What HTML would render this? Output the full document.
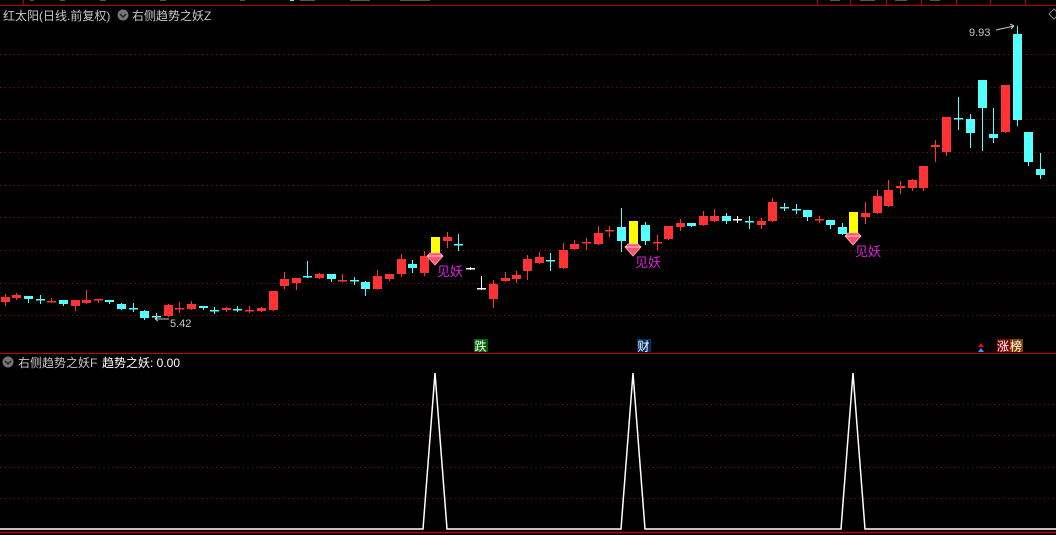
<!DOCTYPE html>
<html><head><meta charset="utf-8"><style>
html,body{margin:0;padding:0;background:#000;width:1056px;height:535px;overflow:hidden}
svg{display:block}
text{font-family:"Liberation Sans","Noto Sans CJK SC","WenQuanYi Zen Hei",sans-serif}
</style></head><body>
<svg id="s" width="1056" height="535" xmlns="http://www.w3.org/2000/svg">
<rect width="1056" height="535" fill="#000"/>
<line x1="0" y1="5.5" x2="1056" y2="5.5" stroke="#b00000" stroke-width="1"/>
<g stroke="#b00000"><line x1="23.5" y1="0" x2="23.5" y2="5"/><line x1="817.5" y1="0" x2="817.5" y2="5"/><line x1="850.5" y1="0" x2="850.5" y2="5"/><line x1="886.5" y1="0" x2="886.5" y2="5"/><line x1="921.5" y1="0" x2="921.5" y2="5"/><line x1="956.5" y1="0" x2="956.5" y2="5"/><line x1="990.5" y1="0" x2="990.5" y2="5"/><line x1="1025.5" y1="0" x2="1025.5" y2="5"/></g>
<g fill="#555"><rect x="30" y="0" width="4" height="1"/><rect x="60" y="0" width="5" height="1"/><rect x="100" y="0" width="6" height="1"/><rect x="160" y="0" width="6" height="1"/><rect x="240" y="0" width="5" height="1"/><rect x="300" y="0" width="15" height="1"/><rect x="350" y="0" width="20" height="1"/><rect x="400" y="0" width="30" height="1"/><rect x="830" y="0" width="10" height="1"/><rect x="860" y="0" width="15" height="1"/><rect x="895" y="0" width="12" height="1"/><rect x="930" y="0" width="10" height="1"/></g>
<g fill="#4ff"><rect x="290" y="0" width="4" height="1"/></g>
<text x="3" y="20" font-size="12" fill="#c8c8c8">红太阳(日线.前复权)</text>
<circle cx="123" cy="15" r="5.5" fill="#777"/><path d="M120 14l3 3 3-3" stroke="#222" stroke-width="1.5" fill="none"/>
<text x="132" y="20" font-size="12" fill="#c8c8c8">右侧趋势之妖Z</text>
<g stroke="#9a1010" stroke-dasharray="1 3.5" stroke-width="1">
<line x1="0" y1="54.5" x2="1056" y2="54.5"/><line x1="0" y1="87.5" x2="1056" y2="87.5"/><line x1="0" y1="119.5" x2="1056" y2="119.5"/><line x1="0" y1="152.5" x2="1056" y2="152.5"/><line x1="0" y1="185.5" x2="1056" y2="185.5"/><line x1="0" y1="217.5" x2="1056" y2="217.5"/><line x1="0" y1="250.5" x2="1056" y2="250.5"/><line x1="0" y1="283.5" x2="1056" y2="283.5"/><line x1="0" y1="315.5" x2="1056" y2="315.5"/>
<line x1="0" y1="404.5" x2="1056" y2="404.5"/><line x1="0" y1="435.5" x2="1056" y2="435.5"/><line x1="0" y1="467.5" x2="1056" y2="467.5"/><line x1="0" y1="498.5" x2="1056" y2="498.5"/>
</g>
<g id="c"></g>
<g id="d"></g>
<text x="437" y="276" font-size="13" fill="#e020e0">见妖</text>
<text x="635" y="267" font-size="13" fill="#e020e0">见妖</text>
<text x="855" y="256" font-size="13" fill="#e020e0">见妖</text>
<text x="170" y="327" font-size="11" fill="#c8c8c8">5.42</text>
<path d="M155 319l3-3M155 319l3 2M155 319h14" stroke="#c8c8c8" fill="none"/>
<text x="969" y="36" font-size="11" fill="#c8c8c8">9.93</text>
<path d="M996 30l18-4M1014 26l-4-2M1014 26l-3 3" stroke="#c8c8c8" fill="none"/>
<path d="M1049 14l5 -5 5 5 -5 5z" stroke="#888" fill="none"/>
<rect x="474" y="339" width="14" height="13" fill="#006400"/><text x="474.5" y="350.5" font-size="12" fill="#fff">跌</text>
<rect x="637" y="339" width="14" height="13" fill="#003060"/><text x="637.5" y="350.5" font-size="12" fill="#fff">财</text>
<path d="M978 347l3-4 3 4z" fill="#e00"/><path d="M978 352l3-4 3 4z" fill="#39f"/>
<rect x="997" y="339" width="13" height="13" fill="#800000"/><text x="997" y="350.5" font-size="12" fill="#fff">涨</text>
<rect x="1010" y="339" width="13" height="13" fill="#804000"/><text x="1010" y="350.5" font-size="12" fill="#fff">榜</text>
<line x1="0" y1="353.5" x2="1056" y2="353.5" stroke="#c00000"/>
<circle cx="8" cy="362" r="5.5" fill="#777"/><path d="M5 361l3 3 3-3" stroke="#222" stroke-width="1.5" fill="none"/>
<text x="18" y="367" font-size="12" fill="#c8c8c8">右侧趋势之妖F</text>
<text x="102" y="367" font-size="12" fill="#fff">趋势之妖: 0.00</text>
<polyline points="0,529 423,529 435,373 447,529 621,529 633,373 645,529 841,529 853,373 865,529 1056,529" fill="none" stroke="#fff" stroke-width="1.5"/>
<line x1="0" y1="532.5" x2="1056" y2="532.5" stroke="#c00000" stroke-width="1.5"/>
</svg>
<script>
var R='#ff3333',C='#54ffff',W='#ffffff',Y='#ffff00';
var D=[[5,297,302,294,305,R],[16,295,298,293,299,R],[28,296,299,296,302,C],[40,299,300,295,303,C],[51,301,302,298,302,R],[63,300,304,300,305,C],[75,300,306,300,310,R],[86,300,303,290,303,R],[98,299,300,299,302,R],[109,300,302,300,303,C],[121,304,309,303,309,C],[133,308,309,303,311,C],[144,311,318,310,319,C],[156,316,317,313,319,C],[168,305,316,304,316,R],[179,308,309,302,312,R],[191,304,309,301,309,R],[203,306,308,306,309,C],[214,310,311,307,313,C],[226,308,310,307,311,R],[237,309,310,306,311,C],[249,310,311,306,312,R],[261,308,311,307,311,R],[273,291,310,291,310,R],[284,279,286,272,288,R],[296,278,283,278,289,R],[307,276,277,261,277,C],[319,274,278,273,278,R],[331,274,279,274,281,C],[342,280,281,274,281,R],[354,280,281,277,284,C],[365,282,289,281,295,C],[377,276,289,270,289,R],[389,274,279,274,280,R],[401,259,274,254,276,R],[412,264,268,260,272,C],[424,256,273,251,275,R],[435,237,256,237,256,Y],[447,237,241,232,247,R],[458,244,245,234,250,C],[470,268,269,267,269,W],[481,288,289,276,289,W],[493,284,299,280,307,R],
[505,278,281,272,281,R],[516,275,279,271,282,R],[527,259,271,255,279,R],[539,257,263,252,263,R],[550,260,261,253,270,C],[563,250,268,243,268,R],[574,244,249,240,249,R],[586,242,243,238,249,R],[598,233,244,226,244,R],[609,230,231,226,236,R],[621,227,241,208,251,C],[633,221,246,221,246,Y],[645,225,241,222,244,C],[657,242,243,235,250,R],[668,226,239,226,239,R],[680,223,227,219,230,R],[691,223,226,223,226,C],[703,216,225,211,225,R],[714,216,221,209,221,R],[726,216,221,213,223,C],[737,219,220,216,222,W],[749,221,222,216,228,C],[761,221,225,218,228,R],[772,202,221,198,221,R],[784,207,208,203,210,C],[796,209,210,204,213,C],[807,210,217,210,220,C],[819,219,220,216,222,R],[830,220,225,220,228,C],[842,227,234,223,234,C],[853,212,234,212,234,Y],[865,213,217,202,223,R],[877,196,213,190,213,R],[888,190,206,180,206,R],[900,186,188,181,193,R],[912,180,188,179,190,R],
[923,166,188,166,190,R],[935,145,147,140,161,R],[946,117,152,117,155,R],[958,118,119,97,129,C],[970,119,133,114,147,C],[982,80,108,80,150,C],[993,134,138,108,142,C],[1005,85,132,85,132,R],[1017,34,120,26,125,C],[1028,132,162,132,165,C],[1040,169,175,153,178,C]];
var g=document.getElementById('c'),h='';
D.forEach(function(d){var x=d[0],c=d[5];
h+='<line x1="'+(x+.5)+'" y1="'+d[3]+'" x2="'+(x+.5)+'" y2="'+(d[4]+1)+'" stroke="'+c+'"/>';
var bh=d[2]-d[1];if(bh<2)bh=1.5;
h+='<rect x="'+(x-4)+'" y="'+d[1]+'" width="9" height="'+bh+'" fill="'+c+'"/>';});
g.innerHTML=h;
var dd='';[[435,253],[633,244],[853,233]].forEach(function(p){var x=p[0],y=p[1];
dd+='<path d="M'+(x-8)+' '+(y+3)+'l3-3h10l3 3-8 9z" fill="#ff5070" stroke="#ffb0c0" stroke-width="0.8"/><path d="M'+(x-8)+' '+(y+3)+'h16" stroke="#ffd0d8"/>';});
document.getElementById('d').innerHTML=dd;
</script>
</body></html>
